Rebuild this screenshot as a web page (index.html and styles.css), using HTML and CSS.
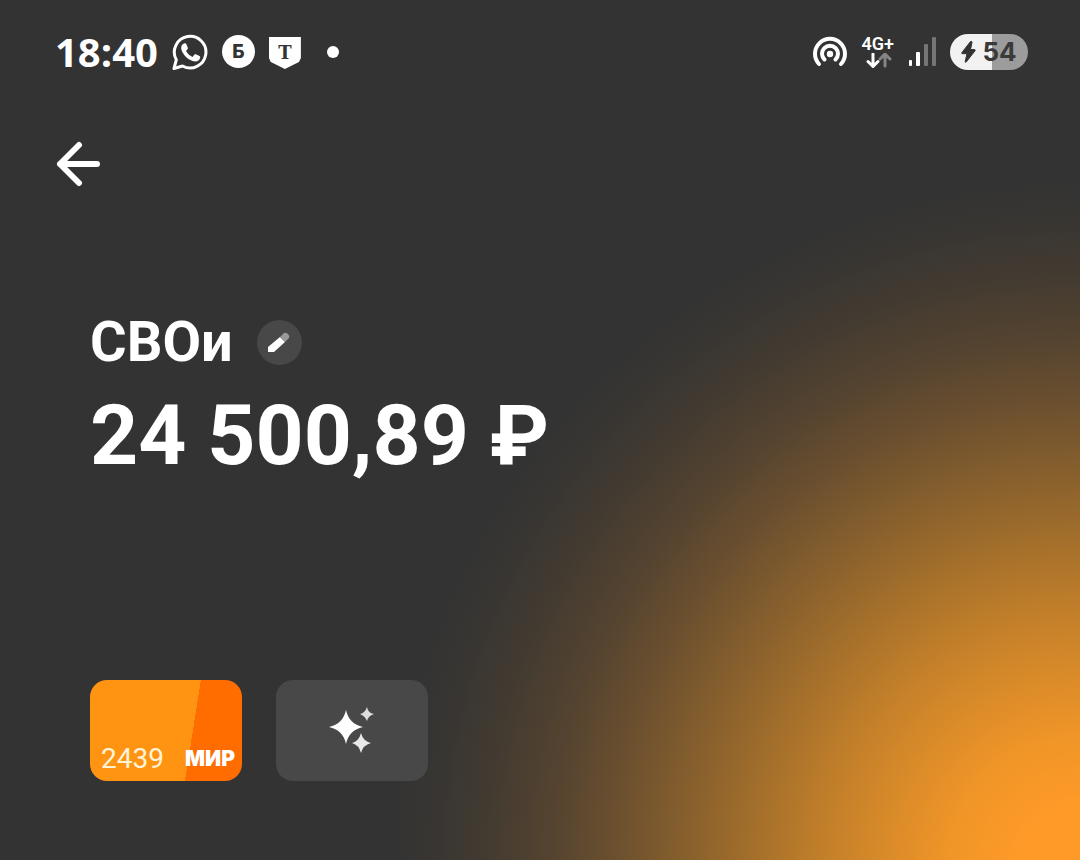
FILE: index.html
```html
<!DOCTYPE html>
<html lang="ru">
<head>
    <meta charset="UTF-8">
    <meta name="viewport" content="width=device-width, initial-scale=1">
    <title>СВОи</title>
    <link rel="stylesheet" href="styles.css">
</head>
<body>
    <!-- Status bar -->
    <div class="status-bar">
        <div class="status-left">
            <span class="time">18:40</span>
            <svg class="icon-chat" width="36" height="36" viewBox="0 0 36 36">
                <path d="M2 34.500 4.300 25.800A15.800 15.800 0 1 1 10.500 32Z" fill="none" stroke="#fff" stroke-width="3" stroke-linejoin="round"/>
                <path d="M12.600 9.200c.8-.1 1.300 0 1.700.9l1.500 3.600c.2.600.1 1-.3 1.500l-1.500 1.900c1.500 2.700 3.600 4.500 6.500 5.800l2-2.300c.4-.5.8-.6 1.400-.3l3.600 1.800c.6.300.8.700.7 1.400-.4 2.700-2.500 4.100-5 4.100-6.600-.6-13.200-7.300-14-13-.1-2.600 1-5 3.400-5.400z" fill="#fff"/>
            </svg>
            <span class="badge-round">Б</span>
            <span class="badge-shield">Т</span>
            <span class="dot"></span>
        </div>
        <div class="status-right">
            <svg width="36" height="32" viewBox="0 0 36 32" fill="none" stroke="#fff" stroke-width="4" stroke-linecap="round">
                <path d="M7 28A15 15 0 1 1 29 28"/>
                <path d="M12.500 23.500A8 8 0 1 1 23.500 23.500"/>
                <circle cx="18" cy="18" r="3.200" fill="#fff" stroke="none"/>
            </svg>
            <div class="network">
                <span>4G+</span>
                <svg width="28" height="16" viewBox="0 0 28 16" fill="none" stroke-width="3" stroke-linecap="round" stroke-linejoin="round">
                    <path d="M9 1v12M4 8.500l5 5 5-5" stroke="#fff"/>
                    <path d="M21 13V1M16 6l5-5 5 5" stroke="#858585"/>
                </svg>
            </div>
            <svg class="signal" width="28" height="30" viewBox="0 0 28 30">
                <rect x="1" y="23" width="3" height="6" rx="1" fill="#fff"/>
                <rect x="8" y="15" width="4" height="14" rx="1" fill="#fff"/>
                <rect x="16" y="7" width="4" height="22" rx="1" fill="#757575"/>
                <rect x="24" y="0" width="4" height="29" rx="1" fill="#757575"/>
            </svg>
            <div class="battery">
                <svg width="15" height="22" viewBox="0 0 15 22">
                    <path d="M9.500.5 1 11.500q-.7 1.200.6 1.200H6L4.200 20.500q0 1.300 1 .5L14 9.800q.7-1.200-.7-1.300H9.500L11 1.500Q11-.3 9.500.500z" fill="#333" stroke="#333"/>
                </svg>
                <span>54</span>
            </div>
        </div>
    </div>

    <button type="button" class="back" aria-label="Назад">
        <svg width="46" height="46" viewBox="0 0 46 46" fill="none" stroke="#fff" stroke-width="6" stroke-linecap="round" stroke-linejoin="round">
            <path d="M23 4 4 23l19 19M4 23h37"/>
        </svg>
    </button>

    <!-- Account -->
    <main class="account">
        <div class="name-row">
            <h1>СВОи</h1>
            <button type="button" class="edit" aria-label="Изменить название">
                <svg width="24" height="24" viewBox="0 0 24 24">
                    <path d="M1 22v-5L13 7l5 5L7 22Z" fill="#fff"/>
                    <path d="m13 7 4-4q2-1 4 1t1 4l-4 4Z" fill="#999"/>
                </svg>
            </button>
        </div>
        <p class="balance">24 500,89 ₽</p>

        <div class="cards">
            <button type="button" class="card card-mir">
                <span class="card-number">2439</span>
                <span class="card-brand">МИР</span>
            </button>
            <button type="button" class="card card-extra" aria-label="Оформление карты">
                <svg width="46" height="48" viewBox="0 0 46 48" fill="#fff">
                    <path d="M17 3Q20 17 34 20 20 23 17 37 14 23 0 20 14 17 17 3Z"/>
                    <path d="M38 0Q39 6 45 7 39 9 38 14 36 9 31 7 36 6 38 0Z" fill="#ddd"/>
                    <path d="M32 26Q34 34 42 36 34 38 32 46 30 38 23 36 30 34 32 26Z" fill="#e8e8e8"/>
                </svg>
            </button>
        </div>
    </main>
</body>
</html>
```

FILE: styles.css
```css
* {
    box-sizing: border-box;
}

body {
    margin: 0;
    min-height: 100vh;
    color: #fff;
    font-family: Roboto, "Noto Sans", sans-serif;
    /* Orange glow in the bottom right corner */
    background: #333 radial-gradient(circle 690px at 100% 101%,
        #ff9a28 0%,
        #fe9a28 9%,
        #f09528 19%,
        #da8b29 28%,
        #c07e2a 38%,
        #a5702b 47%,
        #88602d 57%,
        #6a4f2f 68%,
        #544330 77%,
        #433b31 86%,
        #393632 93%,
        #333 100%) no-repeat;
}

button {
    border: none;
    padding: 0;
    background: none;
    color: inherit;
    font-family: inherit;
    cursor: pointer;
}

svg {
    display: block;
    flex: none;
}

/* Status bar */
.status-bar {
    display: flex;
    justify-content: space-between;
    align-items: center;
    height: 103px;
    padding: 0 52px 0 55px;
}

.status-left,
.status-right {
    display: flex;
    align-items: center;
}

.status-left {
    gap: 14px;
}

.time {
    font-family: "Open Sans", sans-serif;
    font-size: 40px;
    font-weight: 700;
    line-height: 40px;
}

.badge-round {
    width: 33px;
    height: 33px;
    border-radius: 50%;
    background: #fff;
    color: #333;
    font-family: Inter, sans-serif;
    font-size: 19px;
    font-weight: 800;
    line-height: 33px;
    text-align: center;
}

.badge-shield {
    width: 32px;
    height: 32px;
    margin-top: 3px;
    background: #fff;
    clip-path: polygon(0 0, 100% 0, 100% 66%, 94% 78%, 50% 100%, 6% 78%, 0 66%);
    color: #333;
    font-family: "DejaVu Serif", serif;
    font-size: 18px;
    font-weight: 700;
    line-height: 32px;
    text-align: center;
}

.dot {
    width: 12px;
    height: 12px;
    margin-left: 12px;
    border-radius: 50%;
    background: #fff;
}

.status-right {
    gap: 14px;
}

.network {
    display: flex;
    flex-direction: column;
    align-items: center;
    font-size: 18px;
    font-weight: 600;
    line-height: 18px;
}

.battery {
    display: flex;
    align-items: center;
    justify-content: center;
    gap: 6px;
    width: 78px;
    height: 36px;
    border-radius: 18px;
    background: linear-gradient(90deg, #f2f2f2 54%, #9c9c9c 54%);
    color: #3a3a3a;
    font-family: Inter, sans-serif;
    font-size: 26px;
    font-weight: 700;
    line-height: 36px;
}

/* Back arrow */
.back {
    display: block;
    margin: 38px 0 0 56px;
}

/* Account name and balance */
.account {
    padding: 123px 90px 79px;
}

.name-row {
    display: flex;
    align-items: center;
    gap: 24px;
}

h1 {
    margin: 0;
    font-size: 56px;
    font-weight: 700;
    line-height: 64px;
}

.edit {
    display: flex;
    align-items: center;
    justify-content: center;
    width: 45px;
    height: 45px;
    border-radius: 50%;
    background: #484848;
}

.balance {
    margin: 14px 0 0;
    font-size: 84px;
    font-weight: 700;
    line-height: 96px;
}

/* Cards */
.cards {
    display: flex;
    gap: 34px;
    margin-top: 196px;
}

.card {
    display: flex;
    width: 152px;
    height: 101px;
    border-radius: 17px;
}

.card-mir {
    align-items: flex-end;
    justify-content: space-between;
    padding: 0 7px 8px 11px;
    background: linear-gradient(99deg, #ff9412 66%, #ff6d00 66%);
}

.card-number {
    color: #fff3d8;
    font-size: 28px;
    line-height: 28px;
}

.card-brand {
    font-family: Inter, sans-serif;
    font-size: 21px;
    font-weight: 900;
    line-height: 28px;
}

.card-extra {
    align-items: center;
    justify-content: center;
    background: #484848;
}
```
